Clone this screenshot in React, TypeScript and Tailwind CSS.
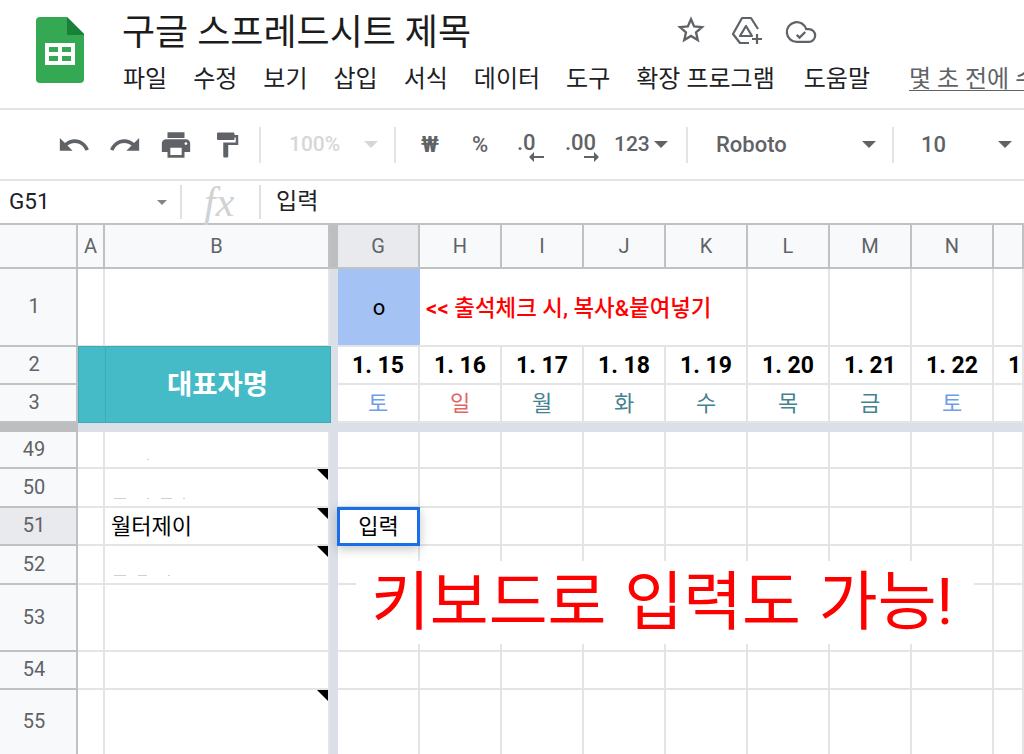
import type { ReactNode } from 'react'

const menus = ['파일', '수정', '보기', '삽입', '서식', '데이터', '도구', '확장 프로그램']
const columns = ['G', 'H', 'I', 'J', 'K', 'L', 'M', 'N', '']
const dates = ['1. 15', '1. 16', '1. 17', '1. 18', '1. 19', '1. 20', '1. 21', '1. 22']
const days = [
  { label: '토', color: 'text-[#6d9eeb]!' },
  { label: '일', color: 'text-[#e06666]!' },
  { label: '월', color: 'text-[#45818e]!' },
  { label: '화', color: 'text-[#45818e]!' },
  { label: '수', color: 'text-[#45818e]!' },
  { label: '목', color: 'text-[#45818e]!' },
  { label: '금', color: 'text-[#45818e]!' },
  { label: '토', color: 'text-[#6d9eeb]!' },
]
const bodyRows = [
  { id: 49, note: false },
  { id: 50, note: true },
  { id: 51, note: true },
  { id: 52, note: true },
  { id: 53, note: false },
  { id: 54, note: false },
  { id: 55, note: true },
]

function MaterialIcon({ d, size = 34 }: { d: string; size?: number }) {
  return (
    <svg width={size} height={size} viewBox="0 0 24 24" fill="#5f6368" className="shrink-0">
      <path d={d} />
    </svg>
  )
}

function Caret({ color = 'border-t-[#5f6368]' }: { color?: string }) {
  return <span className={`block w-0 h-0 border-x-[7px] border-x-transparent border-t-[7px] ${color}`} />
}

function ToolbarDivider() {
  return <span className="block w-[2px] h-[36px] bg-[#e3e4e5] shrink-0" />
}

function SheetsLogo() {
  return (
    <svg width="48" height="66" viewBox="0 0 48 66" className="shrink-0">
      <path d="M4 0h27l17 17v45a4 4 0 0 1-4 4H4a4 4 0 0 1-4-4V4a4 4 0 0 1 4-4z" fill="#34a853" />
      <path d="M31 0l17 17v1H31z" fill="#188038" />
      <rect x="9" y="26" width="30" height="22" fill="#fff" />
      <rect x="13" y="30" width="9" height="5" fill="#34a853" />
      <rect x="26" y="30" width="9" height="5" fill="#34a853" />
      <rect x="13" y="39" width="9" height="5" fill="#34a853" />
      <rect x="26" y="39" width="9" height="5" fill="#34a853" />
    </svg>
  )
}

function Header() {
  return (
    <div className="h-[110px] border-b-2 border-[#e2e3e5] flex pl-[36px] pt-[17px]">
      <SheetsLogo />
      <div className="ml-[38px] flex-1 min-w-0">
        <div className="flex items-center h-[32px]">
          <span className="text-[36px] leading-[32px] text-[#1c1c1c] whitespace-nowrap">구글 스프레드시트 제목</span>
          <svg width="28" height="28" viewBox="0 0 24 24" fill="none" stroke="#5f6368" strokeWidth="2" strokeLinejoin="miter" className="ml-[206px] -mt-[6px] shrink-0">
            <path d="M12 2.8l2.7 6.2 6.7.6-5.1 4.4 1.5 6.6L12 17.1l-5.8 3.5 1.5-6.6-5.1-4.4 6.7-.6z" />
          </svg>
          <svg width="34" height="34" viewBox="0 0 34 34" fill="none" stroke="#5f6368" strokeWidth="2.2" strokeLinejoin="round" className="ml-[25px] -mt-[2px] shrink-0">
            <path d="M28 14L21 3H12L3 19l7 9h9" />
            <path d="M16 11l-6 10h12z" />
            <path d="M27 19v10M22 24h10" />
          </svg>
          <svg width="34" height="34" viewBox="0 0 24 24" fill="none" stroke="#5f6368" strokeWidth="1.6" className="ml-[20px] -mt-[2px] shrink-0">
            <path d="M17.5 19H9a7 7 0 1 1 6.71-9h1.79a4.5 4.5 0 1 1 0 9Z" />
            <path d="M9 14l2 2 4-4" />
          </svg>
        </div>
        <div className="flex items-center mt-[15px] pl-px text-[24px] leading-[30px] text-[#202124] whitespace-nowrap overflow-hidden gap-[26px]">
          {menus.map((menu) => (
            <span key={menu}>{menu}</span>
          ))}
          <span className="ml-[3px]">도움말</span>
          <span className="ml-[13px] text-[#5f6368] underline underline-offset-[3px] decoration-1">몇 초 전에 수정</span>
        </div>
      </div>
    </div>
  )
}

function Toolbar() {
  return (
    <div className="h-[71px] border-b-2 border-[#e2e3e5] flex items-center pl-[57px] text-[#5f6368] text-[22px] font-medium whitespace-nowrap overflow-hidden">
      <div className="flex items-center">
        <MaterialIcon d="M12.5 8c-2.65 0-5.05.99-6.9 2.6L2 7v9h9l-3.62-3.62c1.39-1.16 3.16-1.88 5.12-1.88 3.54 0 6.55 2.31 7.6 5.5l2.37-.78C21.08 11.03 17.15 8 12.5 8z" />
        <span className="ml-[17px]">
          <MaterialIcon d="M18.4 10.6C16.55 8.99 14.15 8 11.5 8c-4.65 0-8.58 3.03-9.96 7.22L3.9 16c1.05-3.19 4.05-5.5 7.6-5.5 1.95 0 3.73.72 5.12 1.88L13 16h9V7l-3.6 3.6z" />
        </span>
        <span className="ml-[17px]">
          <MaterialIcon d="M19 8H5c-1.66 0-3 1.34-3 3v6h4v4h12v-4h4v-6c0-1.66-1.34-3-3-3zm-3 11H8v-5h8v5zm3-7c-.55 0-1-.45-1-1s.45-1 1-1 1 .45 1 1-.45 1-1 1zm-1-9H6v4h12V3z" />
        </span>
        <span className="ml-[19px] mr-[2px]">
          <MaterialIcon size={30} d="M18 4V3c0-.55-.45-1-1-1H5c-.55 0-1 .45-1 1v4c0 .55.45 1 1 1h12c.55 0 1-.45 1-1V6h1v4H9v11c0 .55.45 1 1 1h2c.55 0 1-.45 1-1v-9h8V4h-3z" />
        </span>
      </div>
      <div className="ml-[15px]"><ToolbarDivider /></div>
      <span className="ml-[28px] w-[53px] text-[#d5d7d9] text-[21px]">100%</span>
      <span className="ml-[22px]"><Caret color="border-t-[#d5d7d9]" /></span>
      <div className="ml-[16px]"><ToolbarDivider /></div>
      <span className="ml-[24px] w-[20px] text-[22px] font-bold text-center">₩</span>
      <span className="ml-[30px] w-[20px] text-[22px] text-center">%</span>
      <div className="ml-[27px] w-[28px] h-[36px] relative text-[22px] leading-[32px]">
        <span className="block">.0</span>
        <svg width="15" height="10" viewBox="0 0 15 10" fill="#5f6368" className="absolute left-[12px] top-[25px]">
          <path d="M5 0v4h10v2H5v4L0 5z" />
        </svg>
      </div>
      <div className="ml-[20px] w-[33px] h-[36px] relative text-[22px] leading-[32px]">
        <span className="block">.00</span>
        <svg width="15" height="10" viewBox="0 0 15 10" fill="#5f6368" className="absolute left-[19px] top-[25px]">
          <path d="M10 0v4H0v2h10v4l5-5z" />
        </svg>
      </div>
      <span className="ml-[16px] w-[37px] text-[21px]">123</span>
      <span className="ml-[3px]"><Caret /></span>
      <div className="ml-[18px]"><ToolbarDivider /></div>
      <span className="ml-[28px] w-[146px]">Roboto</span>
      <Caret />
      <div className="ml-[16px]"><ToolbarDivider /></div>
      <span className="ml-[27px] w-[77px]">10</span>
      <Caret />
    </div>
  )
}

function FormulaBar() {
  return (
    <div className="h-[44px] border-b-2 border-[#c0c1c2] flex items-center text-[23px] text-[#202124]">
      <span className="ml-[9px] w-[148px] text-[22.5px]">G51</span>
      <span className="block w-0 h-0 border-x-[5px] border-x-transparent border-t-[5px] border-t-[#80868b]" />
      <span className="ml-[13px] block w-[2px] h-[34px] bg-[#dfe0e1]" />
      <span className="ml-[22px] w-[55px] text-[42px] leading-[36px] italic text-[#d0d2d4] [font-family:'Liberation_Serif',serif]">fx</span>
      <span className="block w-[2px] h-[34px] bg-[#dfe0e1]" />
      <span className="ml-[15px]">입력</span>
    </div>
  )
}

function ColHeader({ label, active = false }: { label: string; active?: boolean }) {
  return (
    <div className={`flex items-center justify-center border-r-2 border-b-2 border-[#c0c1c2] text-[20px] text-[#5f6368] ${active ? 'bg-[#e8eaed]' : 'bg-[#f8f9fa]'}`}>
      {label}
    </div>
  )
}

function RowHeader({ label, active = false }: { label: number | string; active?: boolean }) {
  return (
    <div className={`flex items-center justify-center pr-[8px] pb-[2px] border-r-2 border-b-2 border-[#c0c1c2] text-[20px] text-[#5f6368] ${active ? 'bg-[#e8eaed]' : 'bg-[#f8f9fa]'}`}>
      {label}
    </div>
  )
}

function Cell({ children, className = '' }: { children?: ReactNode; className?: string }) {
  return (
    <div className={`relative flex items-center justify-center min-w-0 overflow-hidden whitespace-nowrap border-r-2 border-b-2 border-[#e3e4e5] bg-white text-[22px] text-black ${className}`}>
      {children}
    </div>
  )
}

function NoteMark() {
  return <span className="absolute top-0 right-0 w-[11px] h-[11px] bg-black [clip-path:polygon(0_0,100%_0,100%_100%)]" />
}

function Speck({ x, y, w }: { x: number; y: number; w: number }) {
  return <span className="absolute h-px bg-[#cfcfcf]" style={{ left: x, top: y, width: w }} />
}

function SheetGrid() {
  return (
    <div className="relative grid grid-cols-[78px_27px_225px_8px_repeat(8,82px)_30px] grid-rows-[44px_78px_38px_38px_9px_37px_39px_38px_39px_67px_38px_66px] overflow-hidden">
      <div className="bg-[#f8f9fa] border-r-2 border-b-2 border-[#c0c1c2]" />
      <ColHeader label="A" />
      <ColHeader label="B" />
      <div className="bg-[#bdbebf] border-b-2 border-[#c0c1c2]" />
      {columns.map((col, i) => (
        <ColHeader key={i} label={col} active={col === 'G'} />
      ))}

      <RowHeader label={1} />
      <Cell />
      <Cell />
      <div className="bg-[#dadfe8]" />
      <Cell className="bg-[#a4c2f4]! border-r-0!">o</Cell>
      <Cell className="col-span-4 justify-start! pl-[6px] pt-[3px] text-[22.4px]! font-medium text-[#ff0000]!">&lt;&lt; 출석체크 시, 복사&amp;붙여넣기</Cell>
      <Cell />
      <Cell />
      <Cell />
      <Cell />

      <RowHeader label={2} />
      <div className="col-span-2 row-span-2 relative -mt-px mr-[-1px] flex items-center justify-center pl-[26px] bg-[#45bbc7] border border-[#3fa9b4] text-[27.5px] font-bold text-white">
        <span className="absolute left-[26px] top-0 bottom-0 w-px bg-[#3fa9b4]" />
        대표자명
      </div>
      <div className="bg-[#dadfe8]" />
      {dates.map((date) => (
        <Cell key={date} className="font-bold text-[23px]! pt-[2px]">{date}</Cell>
      ))}
      <Cell className="justify-start! pl-[14px] pt-[2px] font-bold text-[23px]!">1. 23</Cell>

      <RowHeader label={3} />
      <div className="bg-[#dadfe8]" />
      {days.map((day, i) => (
        <Cell key={i} className={day.color}>{day.label}</Cell>
      ))}
      <Cell />

      <div className="bg-[#bdbebf]" />
      <div className="col-span-12 bg-[#dadfe8]" />

      {bodyRows.map((row) => (
        <div key={row.id} className="contents">
          <RowHeader label={row.id} active={row.id === 51} />
          <Cell />
          <Cell className="justify-start! pl-[6px]">
            {row.note && <NoteMark />}
            {row.id === 51 && '월터제이'}
            {row.id === 49 && <Speck x={42} y={27} w={2} />}
            {row.id === 50 && (
              <>
                <Speck x={9} y={29} w={12} />
                <Speck x={42} y={29} w={2} />
                <Speck x={56} y={29} w={11} />
                <Speck x={78} y={29} w={2} />
              </>
            )}
            {row.id === 52 && (
              <>
                <Speck x={9} y={29} w={12} />
                <Speck x={33} y={29} w={9} />
                <Speck x={63} y={29} w={2} />
              </>
            )}
          </Cell>
          <div className="bg-[#dadfe8]" />
          {columns.map((col, i) =>
            row.id === 51 && col === 'G' ? (
              <div key={i} className="relative z-10 -ml-px -mt-px flex items-center justify-center bg-white border-[3px] border-[#1a6fe8] text-[22px] text-black shadow-[0_3px_10px_rgba(60,64,67,0.3)]">
                입력
              </div>
            ) : (
              <Cell key={i} />
            ),
          )}
        </div>
      ))}

      <div className="absolute left-[356px] top-[336px] w-[618px] h-[83px] z-20 bg-white flex items-center justify-center pr-[6px] text-[64px] leading-none [word-spacing:2px] text-[#ff0000] whitespace-nowrap">
        키보드로 입력도 가능!
      </div>
    </div>
  )
}

export default function App() {
  return (
    <div className="w-[1024px] h-[754px] overflow-hidden bg-white [font-family:Roboto,'Noto_Sans_CJK_KR',sans-serif]">
      <Header />
      <Toolbar />
      <FormulaBar />
      <SheetGrid />
    </div>
  )
}
